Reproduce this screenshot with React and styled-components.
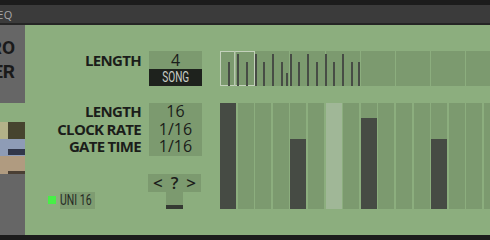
import React from 'react'
import styled, { createGlobalStyle } from 'styled-components'

const GlobalStyle = createGlobalStyle`
  html, body { margin: 0; padding: 0; background: #1c1c1c; }
  body { font-family: "Open Sans", "Noto Sans", sans-serif; }
  * { box-sizing: border-box; }
`

const Frame = styled.div`
  width: 490px;
  height: 240px;
  overflow: hidden;
  display: flex;
  flex-direction: column;
  background: #1c1c1c;
  border-top: 5px solid #1c1c1c;
  border-bottom: 5px solid #1c1c1c;
`

const TitleBar = styled.div`
  height: 20px;
  flex: none;
  display: flex;
  align-items: center;
  background: #3b3b3b;
  border-bottom: 2px solid #252525;
  overflow: hidden;
`

const TitleText = styled.span`
  margin-left: -9px;
  font-size: 11px;
  color: #a8a8a8;
  letter-spacing: 0.3px;
`

const Body = styled.div`
  flex: 1;
  display: flex;
  background: #8cae7e;
  min-height: 0;
`

const Strip = styled.div`
  width: 25px;
  flex: none;
  display: flex;
  flex-direction: column;
`

const NameBox = styled.div`
  height: 78px;
  background: #666666;
  display: flex;
  flex-direction: column;
  align-items: flex-end;
  padding: 11px 10px 0 0;
  overflow: hidden;
  font-family: "Roboto", sans-serif;
  font-weight: 700;
  font-size: 19px;
  line-height: 24px;
  color: #1a1a1a;
  white-space: nowrap;
`

const StripGap = styled.div`
  height: 19px;
`

const Chip = styled.div`
  height: ${({ $h }) => $h}px;
  display: flex;
  background: ${({ $bg }) => $bg};
`

const ChipSide = styled.div`
  width: 8px;
  background: ${({ $bg }) => $bg || 'transparent'};
`

const ChipMain = styled.div`
  flex: 1;
  display: flex;
  flex-direction: column;
  justify-content: ${({ $pos }) => $pos === 'bottom' ? 'flex-end' : 'stretch'};
  background: ${({ $bg }) => $bg || 'transparent'};
  padding-bottom: ${({ $pb }) => $pb || 0}px;
`

const ChipInner = styled.div`
  height: ${({ $h }) => $h}px;
  background: ${({ $bg }) => $bg};
`

const StripRest = styled.div`
  flex: 1;
  background: #666666;
`

const Content = styled.div`
  flex: 1;
  display: flex;
  flex-direction: column;
  padding-top: 26px;
`

const Row = styled.div`
  display: flex;
  align-items: flex-start;
`

const LabelCol = styled.div`
  width: 116px;
  margin-right: 8px;
  display: flex;
  flex-direction: column;
  align-items: flex-end;
`

const Label = styled.div`
  height: ${({ $h }) => $h || 17.6}px;
  line-height: ${({ $h }) => $h || 17.6}px;
  font-weight: 700;
  font-size: 15px;
  letter-spacing: -0.7px;
  color: #1b1d1a;
  white-space: nowrap;
`

const ValueBox = styled.div`
  width: 53px;
  background: #7c9a6f;
  display: flex;
  flex-direction: column;
`

const Value = styled.div`
  height: ${({ $h }) => $h || 17.6}px;
  line-height: ${({ $h }) => $h || 17.6}px;
  text-align: center;
  font-size: 16px;
  font-weight: 500;
  color: #1b1d1a;
`

const Narrow = styled.span`
  display: inline-block;
  transform: scaleX(${({ $sx }) => $sx || 0.8});
  transform-origin: ${({ $origin }) => $origin || 'center'};
`

const SongTag = styled.div`
  height: 17px;
  line-height: 17px;
  background: #1e221d;
  color: #c9cdc6;
  text-align: center;
  font-family: "Roboto", sans-serif;
  font-size: 14px;
`

const Overview = styled.div`
  position: relative;
  margin-left: 18px;
  height: 35px;
  display: grid;
  grid-template-columns: repeat(8, 34.2px);
  column-gap: 1px;
`

const OvCell = styled.div`
  background: #7c9a6f;
`

const OvChart = styled.svg`
  position: absolute;
  left: 0;
  top: 0;
`

const Section = styled.div`
  display: flex;
  margin-top: 17px;
`

const LeftPart = styled.div`
  width: 177px;
  display: flex;
  flex-direction: column;
`

const Controls = styled.div`
  display: flex;
  align-items: flex-start;
  margin-top: 18px;
`

const UniWrap = styled.div`
  width: 100px;
  display: flex;
  align-items: center;
  margin: 18px 0 0 23px;
  gap: 4px;
`

const Led = styled.div`
  width: 8px;
  height: 8px;
  background: #47ef47;
`

const UniLabel = styled.div`
  width: 35px;
  height: 17px;
  line-height: 17px;
  background: #7e9c71;
  color: #262a24;
  font-family: "Roboto", sans-serif;
  font-size: 15px;
  white-space: nowrap;
`

const Nav = styled.div`
  width: 53px;
  display: flex;
  flex-direction: column;
  align-items: center;
`

const NavBox = styled.div`
  width: 53px;
  height: 18px;
  background: #7c9a6f;
  display: flex;
  justify-content: space-between;
  align-items: center;
  padding: 0 5px;
  font-weight: 600;
  font-size: 17px;
  color: #1b1d1a;
`

const NavStem = styled.div`
  width: 17px;
  height: 17px;
  background: #7c9a6f;
  display: flex;
  align-items: flex-end;
`

const NavKnob = styled.div`
  width: 100%;
  height: 4px;
  background: #353a33;
`

const Steps = styled.div`
  margin-left: 18px;
  height: 106px;
  display: grid;
  grid-template-columns: repeat(16, 16px);
  column-gap: 1.6px;
`

const Step = styled.div`
  background: ${({ $active }) => $active ? '#a0b797' : '#7c9a6f'};
  display: flex;
  align-items: flex-end;
`

const StepBar = styled.div`
  width: 100%;
  background: #464b44;
`

const miniBars = [
  [9, 's'], [18, 't'], [27, 's'], [36, 't'], [44, 's'], [53, 't'], [62, 's'], [67, 'x'],
  [71, 't'], [79, 's'], [88, 't'], [97, 's'], [106, 't'], [114, 's'], [123, 't'], [132, 's'], [139, 's'],
]
const barTop = { t: 3, s: 11, x: 22 }

const stepHeights = [106, 0, 0, 0, 70, 0, 0, 0, 91, 0, 0, 0, 70, 0, 0, 0]

export default function App() {
  return (
    <>
      <GlobalStyle />
      <Frame>
        <TitleBar>
          <TitleText>SEQ</TitleText>
        </TitleBar>
        <Body>
          <Strip>
            <NameBox>
              <span>MICRO</span>
              <span>SEQUENCER</span>
            </NameBox>
            <StripGap />
            <Chip $h={17} $bg="#8cae7e">
              <ChipSide $bg="#b3b289" />
              <ChipMain $bg="#46442f" />
            </Chip>
            <Chip $h={17} $bg="#8e9cb6">
              <ChipSide />
              <ChipMain $pos="bottom" $pb={1}>
                <ChipInner $h={6} $bg="#31374a" />
              </ChipMain>
            </Chip>
            <Chip $h={18} $bg="#b09b80">
              <ChipSide />
              <ChipMain $pos="bottom">
                <ChipInner $h={3} $bg="#4a3f34" />
              </ChipMain>
            </Chip>
            <StripRest />
          </Strip>

          <Content>
            <Row>
              <LabelCol>
                <Label $h={18}>LENGTH</Label>
              </LabelCol>
              <ValueBox>
                <Value $h={18}>4</Value>
                <SongTag><Narrow $sx={0.72}>SONG</Narrow></SongTag>
              </ValueBox>
              <Overview>
                {Array.from({ length: 8 }).map((_, i) => <OvCell key={i} />)}
                <OvChart width="150" height="35" viewBox="0 0 150 35">
                  <rect x="0.5" y="0.5" width="34" height="34" fill="none" stroke="#c3d1bb" strokeWidth="1" />
                  <rect x="14" y="0" width="1.5" height="35" fill="#b9c9b0" />
                  {miniBars.map(([x, k], i) => (
                    <rect key={i} x={x - 1} y={barTop[k]} width="2" height={35 - barTop[k]} fill="#474c45" />
                  ))}
                </OvChart>
              </Overview>
            </Row>

            <Section>
              <LeftPart>
                <Row>
                  <LabelCol>
                    <Label>LENGTH</Label>
                    <Label>CLOCK RATE</Label>
                    <Label>GATE TIME</Label>
                  </LabelCol>
                  <ValueBox>
                    <Value>16</Value>
                    <Value>1/16</Value>
                    <Value>1/16</Value>
                  </ValueBox>
                </Row>
                <Controls>
                  <UniWrap>
                    <Led />
                    <UniLabel><Narrow $sx={0.7} $origin="left">UNI 16</Narrow></UniLabel>
                  </UniWrap>
                  <Nav>
                    <NavBox>
                      <span>&lt;</span>
                      <span>?</span>
                      <span>&gt;</span>
                    </NavBox>
                    <NavStem>
                      <NavKnob />
                    </NavStem>
                  </Nav>
                </Controls>
              </LeftPart>
              <Steps>
                {stepHeights.map((h, i) => (
                  <Step key={i} $active={i === 6}>
                    {h > 0 && <StepBar style={{ height: h }} />}
                  </Step>
                ))}
              </Steps>
            </Section>
          </Content>
        </Body>
      </Frame>
    </>
  )
}
